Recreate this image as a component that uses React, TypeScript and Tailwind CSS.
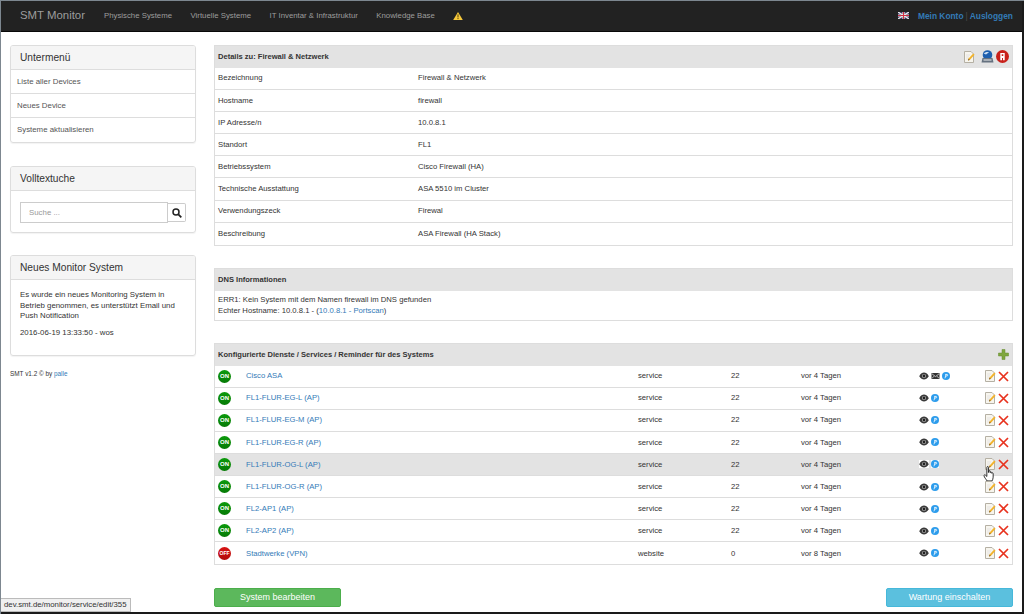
import React from "react";

const font = { fontFamily: '"Liberation Sans", Arial, sans-serif' };

const Eye = () => (
  <svg width="10" height="8" viewBox="0 0 10 8" className="shrink-0">
    <path d="M0.2 4.2C1.8 1.4 3.3 0.6 5 0.6S8.2 1.4 9.8 4.2C8.2 6.6 6.7 7.4 5 7.4S1.8 6.6 0.2 4.2Z" fill="#3a3a3a" />
    <circle cx="5" cy="4" r="2.1" fill="#bbb" />
    <circle cx="5" cy="4" r="1.4" fill="#222" />
  </svg>
);
const Mail = () => (
  <svg width="9" height="8" viewBox="0 0 9 8" className="shrink-0">
    <rect x="0.5" y="1" width="8" height="6" fill="#333" />
    <path d="M1 1.8L4.5 4.6L8 1.8M1 6.4L3 4.2M8 6.4L6 4.2" stroke="#ddd" strokeWidth="0.8" fill="none" />
  </svg>
);
const Push = () => (
  <svg width="8" height="8" viewBox="0 0 8 8" className="shrink-0">
    <circle cx="4" cy="4" r="4" fill="#2c9cec" />
    <path d="M3 6.3L4 2.4M3.2 2.4H5.2C5.9 2.4 5.9 4 5 4H3.8" stroke="#fff" strokeWidth="0.8" fill="none" />
  </svg>
);
const Edit = () => (
  <svg width="11" height="12" viewBox="0 0 11 12" className="shrink-0">
    <path d="M0.5 0.5H7L9.5 3V11.5H0.5Z" fill="#f7f5ee" stroke="#b5b0a4" />
    <path d="M2 4H6M2 6H5M2 8H4" stroke="#ddd" strokeWidth="0.7" />
    <path d="M4 9.5L4.6 7.6L9.2 2.6L10.6 3.8L6 8.8Z" fill="#f2b32c" />
    <path d="M4 9.5L4.6 7.6L5.8 8.9Z" fill="#7a5a2a" />
  </svg>
);
const Del = () => (
  <svg width="11" height="11" viewBox="0 0 11 11" className="shrink-0">
    <path d="M1 1L10 10M10 1L1 10" stroke="#e8321e" strokeWidth="1.7" />
  </svg>
);
const Plus = () => (
  <svg width="11" height="11" viewBox="0 0 11 11">
    <path d="M4 0.5H7V4H10.5V7H7V10.5H4V7H0.5V4H4Z" fill="#7fa63f" stroke="#648a2e" strokeWidth="0.5" />
  </svg>
);
const Warn = () => (
  <svg width="10" height="10" viewBox="0 0 11 10">
    <path d="M5.5 0.5L10.8 9.5H0.2Z" fill="#f6c83b" />
    <path d="M5.5 3.2V6.6M5.5 7.3V8.4" stroke="#3a2d05" strokeWidth="1" />
  </svg>
);
const Flag = () => (
  <svg width="11" height="7" viewBox="0 0 11 7">
    <rect width="11" height="7" fill="#3b3b66" />
    <path d="M0 0L11 7M11 0L0 7" stroke="#eee" strokeWidth="1.3" />
    <path d="M5.5 0V7M0 3.5H11" stroke="#eee" strokeWidth="2.2" />
    <path d="M5.5 0V7M0 3.5H11" stroke="#cf3045" strokeWidth="1.1" />
  </svg>
);
const Printer = () => (
  <svg width="13" height="13" viewBox="0 0 13 13">
    <circle cx="6.5" cy="5" r="4.8" fill="#1e5fae" />
    <path d="M2.6 3.6C4 2 6 1.6 8 2.2L5 4.5Z" fill="#c8dcf2" />
    <path d="M1.5 8H11.5L12.5 12.5H0.5Z" fill="#65717f" />
    <rect x="2.5" y="9.5" width="8" height="1" fill="#eee" />
  </svg>
);
const Badge = () => (
  <svg width="13" height="13" viewBox="0 0 13 13">
    <circle cx="6.5" cy="6.5" r="6.5" fill="#c8201a" />
    <path d="M4.3 3H8.7V10.3H7V8H6V10.3H4.3ZM5.7 4.3V6H7.3V4.3Z" fill="#fff" fillRule="evenodd" />
  </svg>
);
const Hand = () => (
  <svg width="12" height="16" viewBox="0 0 11 15">
    <path
      d="M3.5 1.2C3.5 0.3 5 0.3 5 1.2V6H5.4V5C5.4 4.2 6.7 4.2 6.7 5V6.2C6.8 5.5 8 5.5 8 6.3V6.8C8.2 6.2 9.4 6.3 9.4 7.1V10.5C9.4 12 8.8 13 8.4 14H3.6C3 12.6 1 10.6 0.8 9.2C0.7 8.4 1.5 8 2.2 8.6L3.5 9.8Z"
      fill="#fff"
      stroke="#111"
      strokeWidth="0.8"
    />
  </svg>
);
const Status = ({ on }: { on: boolean }) => (
  <span
    className={`flex h-[13px] w-[13px] items-center justify-center rounded-full font-bold text-white ${
      on
        ? "bg-gradient-to-b from-[#0c9a0c] to-[#067a06] text-[6px]"
        : "bg-gradient-to-b from-[#d81414] to-[#b00a0a] text-[5px]"
    }`}
  >
    {on ? "ON" : "OFF"}
  </span>
);
const Search = () => (
  <svg width="10" height="10" viewBox="0 0 10 10">
    <circle cx="4" cy="4" r="3" fill="none" stroke="#222" strokeWidth="1.5" />
    <path d="M6.3 6.3L9.3 9.3" stroke="#222" strokeWidth="1.8" />
  </svg>
);

const details = [
  ["Bezeichnung", "Firewall & Netzwerk"],
  ["Hostname", "firewall"],
  ["IP Adresse/n", "10.0.8.1"],
  ["Standort", "FL1"],
  ["Betriebssystem", "Cisco Firewall (HA)"],
  ["Technische Ausstattung", "ASA 5510 im Cluster"],
  ["Verwendungszeck", "Firewal"],
  ["Beschreibung", "ASA Firewall (HA Stack)"],
];

const services = [
  { name: "Cisco ASA", type: "service", n: "22", t: "vor 4 Tagen", on: true, mail: true },
  { name: "FL1-FLUR-EG-L (AP)", type: "service", n: "22", t: "vor 4 Tagen", on: true },
  { name: "FL1-FLUR-EG-M (AP)", type: "service", n: "22", t: "vor 4 Tagen", on: true },
  { name: "FL1-FLUR-EG-R (AP)", type: "service", n: "22", t: "vor 4 Tagen", on: true },
  { name: "FL1-FLUR-OG-L (AP)", type: "service", n: "22", t: "vor 4 Tagen", on: true, hover: true },
  { name: "FL1-FLUR-OG-R (AP)", type: "service", n: "22", t: "vor 4 Tagen", on: true },
  { name: "FL2-AP1 (AP)", type: "service", n: "22", t: "vor 4 Tagen", on: true },
  { name: "FL2-AP2 (AP)", type: "service", n: "22", t: "vor 4 Tagen", on: true },
  { name: "Stadtwerke (VPN)", type: "website", n: "0", t: "vor 8 Tagen", on: false },
];

const SidePanel = ({ title, children, className }: { title: string; children: React.ReactNode; className: string }) => (
  <div className={`overflow-hidden rounded-[3px] border border-[#ddd] shadow-[0_1px_1px_rgba(0,0,0,0.05)] ${className}`}>
    <div className="flex h-[24px] items-center border-b border-[#ddd] bg-[#f5f5f5] pl-[9px] text-[10.2px] text-[#333]">
      {title}
    </div>
    {children}
  </div>
);

export default function App() {
  return (
    <div
      style={font}
      className="relative flex h-[614px] w-[1024px] flex-col overflow-hidden border-t border-l border-[#7d8790] bg-white text-[7.7px] text-[#333]"
    >
      <nav className="flex h-[31px] shrink-0 items-center border-b border-[#080808] bg-[#222] pr-[11px] pl-[19px]">
        <span className="mr-[19px] text-[11.4px] text-[#9d9d9d]">SMT Monitor</span>
        <div className="flex items-center gap-[18.5px] text-[7.8px] text-[#9d9d9d]">
          <span>Physische Systeme</span>
          <span>Virtuelle Systeme</span>
          <span>IT Inventar & Infrastruktur</span>
          <span>Knowledge Base</span>
          <Warn />
        </div>
        <div className="ml-auto flex items-center text-[8.4px] font-bold text-[#337ab7]">
          <span className="mr-[9px] flex"><Flag /></span>
          <span>Mein Konto</span>
          <span className="mx-[2px] font-normal text-[#4a4a4a]">|</span>
          <span>Ausloggen</span>
        </div>
      </nav>

      <div className="flex min-h-0 flex-1 pt-[13px] pr-[11px] pl-[9px]">
        <aside className="flex w-[186px] shrink-0 flex-col text-[7.85px]">
          <SidePanel title="Untermenü" className="h-[98px]">
            {["Liste aller Devices", "Neues Device", "Systeme aktualisieren"].map((s, i) => (
              <div
                key={s}
                className={`flex h-[24px] items-center pl-[6px] text-[#555] ${i < 2 ? "border-b border-[#ddd]" : ""}`}
              >
                {s}
              </div>
            ))}
          </SidePanel>
          <SidePanel title="Volltextuche" className="mt-[23px] h-[67px]">
            <div className="flex items-center pt-[11px] pl-[9px]">
              <div className="flex h-[21px] w-[148px] items-center border border-[#ccc] pl-[8px] text-[#999]">
                Suche ...
              </div>
              <div className="flex h-[19px] w-[18px] items-center justify-center rounded-r-[2px] border border-l-0 border-[#ccc]">
                <Search />
              </div>
            </div>
          </SidePanel>
          <SidePanel title="Neues Monitor System" className="mt-[22px] h-[101px]">
            <div className="px-[9px] pt-[10px] leading-[10.6px]">
              <p>Es wurde ein neues Monitoring System in Betrieb genommen, es unterstützt Email und Push Notification</p>
              <p className="mt-[6px]">2016-06-19 13:33:50 - wos</p>
            </div>
          </SidePanel>
          <div className="mt-[13px] text-[6.4px]">
            SMT v1.2 © by <span className="text-[#337ab7]">palle</span>
          </div>
        </aside>

        <main className="ml-[18px] flex min-w-0 flex-1 flex-col">
          <section className="border border-[#ddd]">
            <div className="flex h-[21.5px] items-center justify-between bg-[#e3e3e3] pr-[3px] pl-[3px] text-[7.55px] font-bold">
              <span>Details zu: Firewall & Netzwerk</span>
              <div className="flex items-center gap-[2px]">
                <span className="mr-[4px] flex"><Edit /></span>
                <Printer />
                <Badge />
              </div>
            </div>
            {details.map(([k, v]) => (
              <div key={k} className="flex h-[22.2px] items-center border-b border-[#ddd] pl-[3px] last:border-b-0">
                <span className="w-[200px]">{k}</span>
                <span>{v}</span>
              </div>
            ))}
          </section>

          <section className="mt-[21.5px] border border-[#ddd]">
            <div className="flex h-[22px] items-center bg-[#e3e3e3] pl-[3px] text-[7.55px] font-bold">DNS Informationen</div>
            <div className="h-[29px] pt-[3px] pl-[3px] leading-[11px]">
              <div>ERR1: Kein System mit dem Namen firewall im DNS gefunden</div>
              <div>
                Echter Hostname: 10.0.8.1 - (<span className="text-[#337ab7]">10.0.8.1 - Portscan</span>)
              </div>
            </div>
          </section>

          <section className="mt-[22px] border border-[#ddd]">
            <div className="flex h-[22px] items-center justify-between bg-[#e3e3e3] pr-[3px] pl-[3px] text-[7.55px] font-bold">
              <span>Konfigurierte Dienste / Services / Reminder für des Systems</span>
              <Plus />
            </div>
            {services.map((s) => (
              <div
                key={s.name}
                className={`relative flex h-[22.1px] items-center border-b border-[#ddd] last:border-b-0 ${
                  s.hover ? "bg-[#e3e3e3]" : ""
                }`}
              >
                <span className="flex w-[31px] justify-start pl-[3px]">
                  <Status on={s.on} />
                </span>
                <span className="w-[392px] text-[#337ab7]">{s.name}</span>
                <span className="w-[93px]">{s.type}</span>
                <span className="w-[70px]">{s.n}</span>
                <span className="w-[118px]">{s.t}</span>
                <span className="flex w-[66px] items-center gap-[2px]">
                  <span className={`flex ${s.hover ? "bg-white" : ""}`}><Eye /></span>
                  {s.mail && <Mail />}
                  <span className={`flex ${s.hover ? "bg-white" : ""}`}><Push /></span>
                </span>
                <span className="flex items-center gap-[2px]">
                  <Edit />
                  <Del />
                </span>
                {s.hover && (
                  <span className="absolute top-[12px] left-[768px]">
                    <Hand />
                  </span>
                )}
              </div>
            ))}
          </section>

          <div className="mt-[23px] flex justify-between">
            <div className="flex h-[18.5px] w-[127px] items-center justify-center rounded-[2px] border border-[#4cae4c] bg-[#5cb85c] text-[9px] text-white">
              System bearbeiten
            </div>
            <div className="flex h-[18.5px] w-[127px] items-center justify-center rounded-[2px] border border-[#46b8da] bg-[#5bc0de] text-[9px] text-white">
              Wartung einschalten
            </div>
          </div>
        </main>
      </div>

      <div className="absolute bottom-[2px] left-0 flex h-[14px] items-center border border-l-0 border-[#bbb] bg-[#f0f0f0] px-[3px] text-[7.8px] text-[#333]">
        dev.smt.de/monitor/service/edit/355
      </div>
      <div className="absolute top-0 right-0 h-full w-[2px] bg-[#1a1a1a]" />
      <div className="absolute bottom-0 left-0 h-[2px] w-full bg-[#1a1a1a]" />
    </div>
  );
}
